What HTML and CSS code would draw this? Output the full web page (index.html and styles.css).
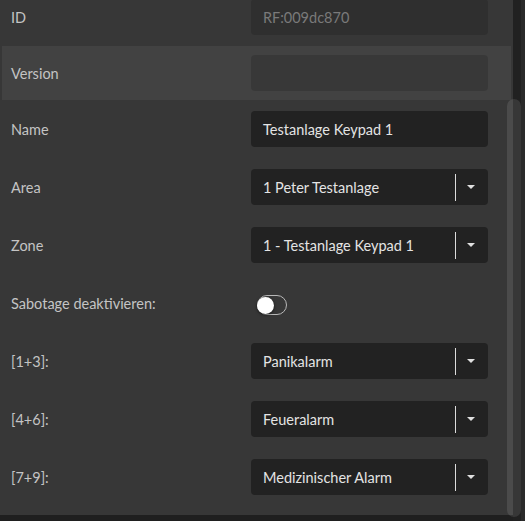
FILE: index.html
```html
<!DOCTYPE html>
<html lang="de">
<head>
<meta charset="utf-8">
<title>Keypad</title>
<link rel="stylesheet" href="styles.css">
</head>
<body>
<div class="screen">
  <div class="panel">
    <div class="list">
      <div class="row">
        <label class="label">ID</label>
        <div class="field field-disabled"><span class="muted">RF:009dc870</span></div>
      </div>
      <div class="row row-hover">
        <label class="label">Version</label>
        <div class="field field-disabled"></div>
      </div>
      <div class="row">
        <label class="label">Name</label>
        <div class="field field-dark"><span class="value">Testanlage Keypad 1</span></div>
      </div>
      <div class="row">
        <label class="label">Area</label>
        <div class="field field-dark select">
          <span class="value">1 Peter Testanlage</span>
          <span class="sep"></span>
          <span class="caret"></span>
        </div>
      </div>
      <div class="row">
        <label class="label">Zone</label>
        <div class="field field-dark select">
          <span class="value">1 - Testanlage Keypad 1</span>
          <span class="sep"></span>
          <span class="caret"></span>
        </div>
      </div>
      <div class="row">
        <label class="label">Sabotage deaktivieren:</label>
        <div class="toggle-cell"><span class="toggle"><span class="knob"></span></span></div>
      </div>
      <div class="row">
        <label class="label">[1+3]:</label>
        <div class="field field-dark select">
          <span class="value">Panikalarm</span>
          <span class="sep"></span>
          <span class="caret"></span>
        </div>
      </div>
      <div class="row">
        <label class="label">[4+6]:</label>
        <div class="field field-dark select">
          <span class="value">Feueralarm</span>
          <span class="sep"></span>
          <span class="caret"></span>
        </div>
      </div>
      <div class="row">
        <label class="label">[7+9]:</label>
        <div class="field field-dark select">
          <span class="value">Medizinischer Alarm</span>
          <span class="sep"></span>
          <span class="caret"></span>
        </div>
      </div>
    </div>
  </div>
  <div class="gutter"></div>
  <div class="edge"></div>
  <div class="thumb"></div>
</div>
</body>
</html>
```
FILE: styles.css
```css
html, body {
  margin: 0;
  padding: 0;
  background: #1f1f1f;
  overflow: hidden;
}
.screen {
  position: relative;
  display: flex;
  width: 525px;
  height: 521px;
  font-family: "Lato", "Open Sans", sans-serif;
  font-size: 14.5px;
}
.panel {
  width: 513px;
  height: 515px;
  background: #373737;
  overflow: hidden;
}
.gutter {
  width: 8px;
  height: 521px;
  background: #212121;
}
.edge {
  width: 4px;
  height: 521px;
  background: #2a2a2a;
}
.thumb {
  position: absolute;
  left: 507px;
  top: 99px;
  width: 14px;
  height: 418px;
  border-radius: 7px;
  background: rgba(255, 255, 255, 0.1);
}
.list {
  margin: -12px 2px 0 2px;
  display: flex;
  flex-direction: column;
}
.row {
  display: grid;
  grid-template-columns: 240px 237px;
  align-items: center;
  height: 58px;
  padding: 0 16px 0 9px;
}
.row-hover {
  height: 54px;
  background: #424242;
}
.label {
  color: #c4c4c4;
}
.field {
  height: 36px;
  border-radius: 4px;
  display: flex;
  align-items: center;
  padding: 0 0 0 12px;
  box-sizing: border-box;
}
.field-disabled {
  background: rgba(0, 0, 0, 0.14);
}
.field-dark {
  background: #222222;
}
.muted {
  color: #7a7a7a;
}
.value {
  color: #e4e4e4;
  flex: 1;
}
.sep {
  width: 1px;
  height: 27px;
  background: #dcdcdc;
  margin-right: 11px;
}
.caret {
  width: 0;
  height: 0;
  border-left: 4px solid transparent;
  border-right: 4px solid transparent;
  border-top: 4px solid #e0e0e0;
  margin-right: 13px;
}
.toggle-cell {
  display: flex;
  align-items: center;
  padding-left: 6px;
  padding-top: 4px;
}
.toggle {
  position: relative;
  width: 28px;
  height: 18px;
  border: 1px solid #b8b8b8;
  border-radius: 10px;
  display: flex;
  align-items: center;
}
.knob {
  width: 17px;
  height: 17px;
  border-radius: 50%;
  background: #ffffff;
  box-shadow: 0 1px 3px rgba(0, 0, 0, 0.6);
  margin-left: -1px;
}
```
